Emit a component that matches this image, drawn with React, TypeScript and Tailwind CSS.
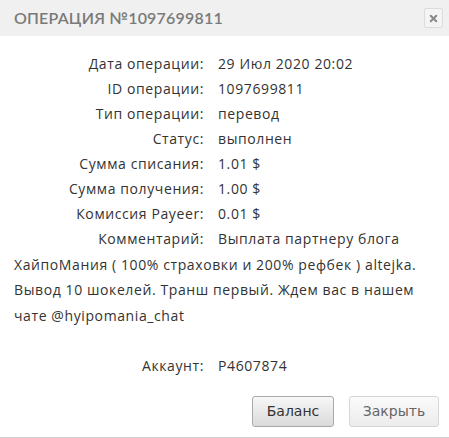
import { X } from "lucide-react";

const rows: [string, string][] = [
  ["Дата операции:", "29 Июл 2020 20:02"],
  ["ID операции:", "1097699811"],
  ["Тип операции:", "перевод"],
  ["Статус:", "выполнен"],
  ["Сумма списания:", "1.01 $"],
  ["Сумма получения:", "1.00 $"],
  ["Комиссия Payeer:", "0.01 $"],
];

export default function App() {
  const font = { fontFamily: '"Open Sans", "DejaVu Sans", sans-serif' };
  return (
    <div className="w-[449px] h-[438px] bg-white flex flex-col border-b border-[#cfcfcf] overflow-hidden">
      <div className="h-[36px] bg-[#f0f0f0] flex items-center justify-between pl-[14px] pr-[6px]">
        <h1
          className="text-[16px] tracking-[0.2px] font-semibold text-[#7a7a7a] uppercase"
          style={{ fontFamily: "Lato, sans-serif" }}
        >
          Операция №1097699811
        </h1>
        <button className="w-[19px] h-[20px] flex items-center justify-center rounded-[2px] border border-[#dcdcdc] bg-[#f4f4f4]">
          <X size={11} strokeWidth={4.5} className="text-[#8a8a8a]" />
        </button>
      </div>

      <div style={font} className="px-[14px] pt-[15px] text-[14px] tracking-[0.6px] text-[#333] leading-[25px]">
        {rows.map(([label, value]) => (
          <div key={label} className="flex">
            <span className="w-[190px] mr-[14px] text-right shrink-0">{label}</span>
            <span>{value}</span>
          </div>
        ))}
        <p className="leading-[25.5px]">
          <span className="inline-block w-[190px] mr-[14px] text-right">Комментарий:</span>
          Выплата партнеру блога ХайпоМания ( 100% страховки и 200% рефбек ) altejka.
          Вывод 10 шокелей. Транш первый. Ждем вас в нашем чате @hyipomania_chat
        </p>
        <div className="flex mt-[25px]">
          <span className="w-[190px] mr-[14px] text-right shrink-0">Аккаунт:</span>
          <span>P4607874</span>
        </div>
      </div>

      <div
        className="mt-auto mb-[10px] flex justify-end gap-[15px] pr-[10px]"
        style={{ fontFamily: '"DejaVu Sans", sans-serif' }}
      >
        <button className="w-[82px] h-[31px] rounded-[3px] border border-[#a9a9a9] bg-gradient-to-b from-[#f7f7f7] to-[#dadada] text-[14px] text-[#333]">
          Баланс
        </button>
        <button className="w-[90px] h-[31px] rounded-[3px] border border-[#d6d6d6] bg-gradient-to-b from-[#fafafa] to-[#ececec] text-[14px] text-[#666]">
          Закрыть
        </button>
      </div>
    </div>
  );
}
